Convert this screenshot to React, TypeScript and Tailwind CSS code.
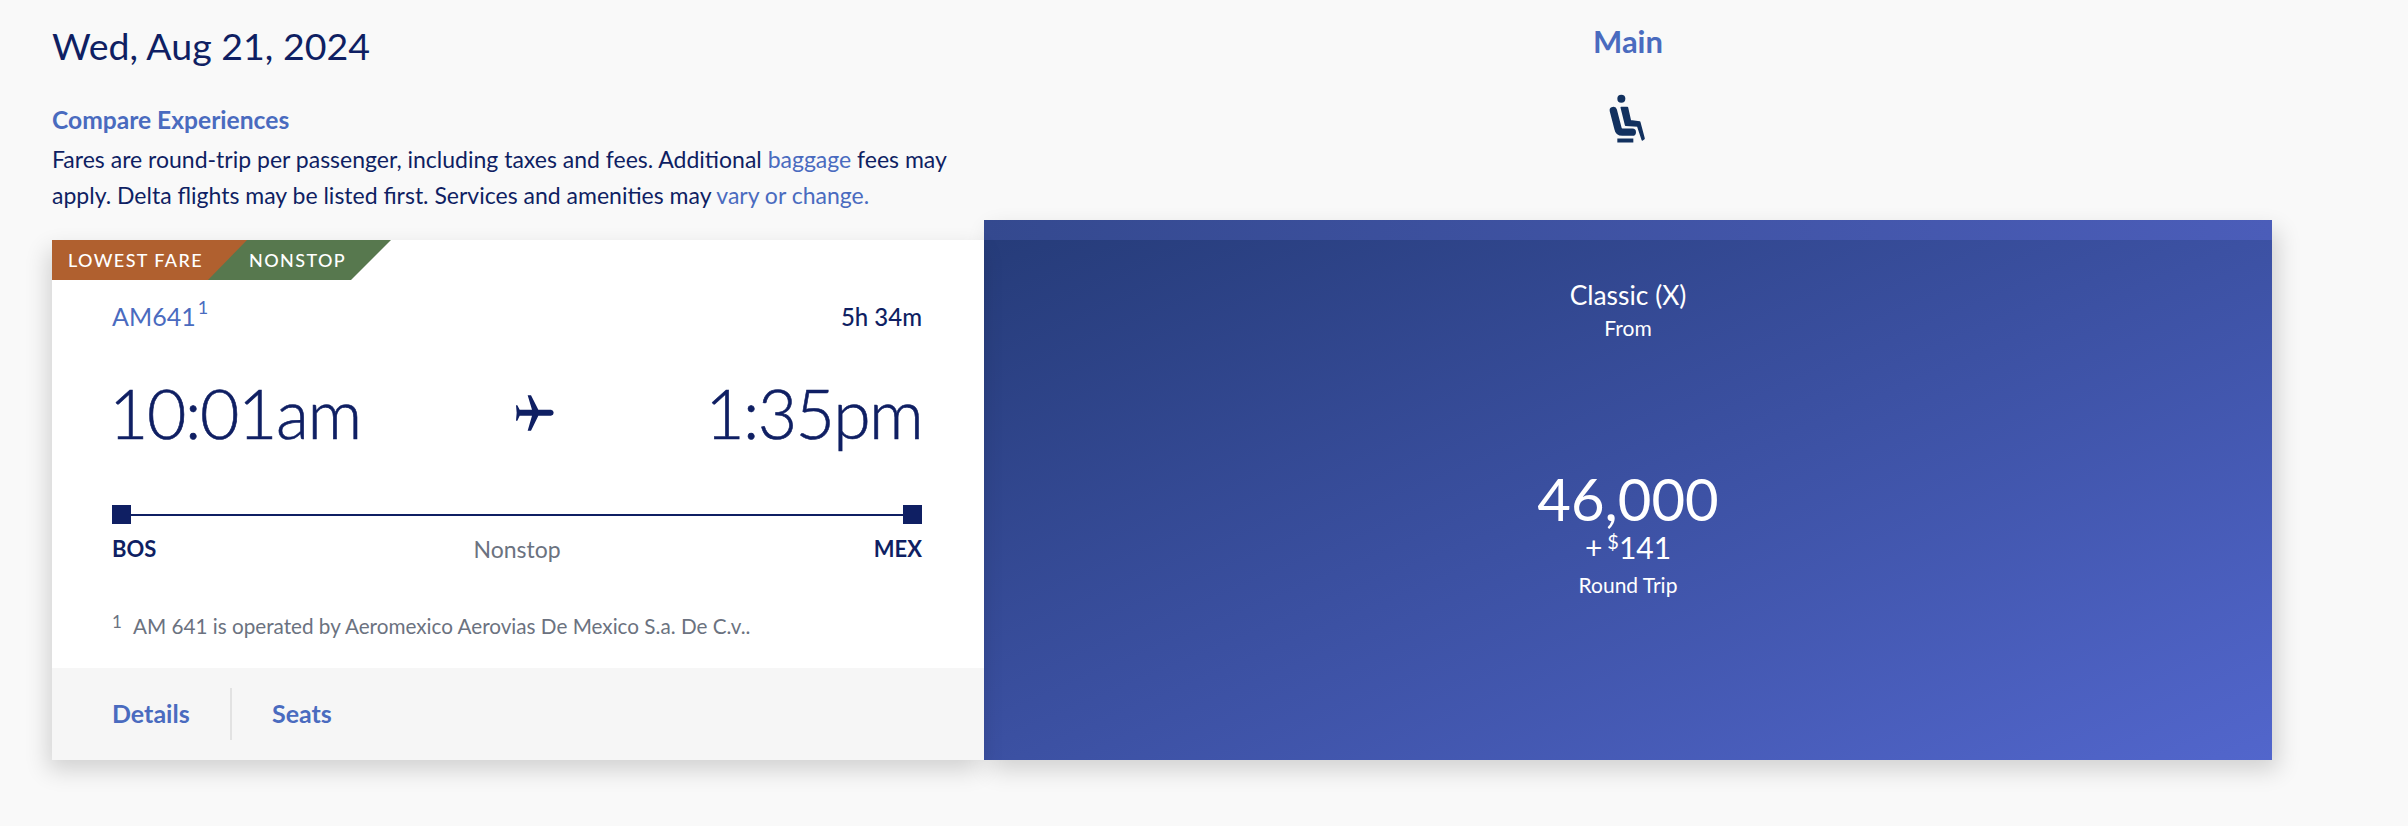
import React from 'react';

function SeatIcon() {
  return (
    <svg viewBox="325 280 120 155" className="w-[40px] h-[52px]" fill="none">
      <circle cx="365" cy="297" r="12" fill="#12315f" />
      <path d="M341 332 L355 386 Q357 397 368 397 L398 397" stroke="#12315f" strokeWidth="22" strokeLinecap="round" strokeLinejoin="round" />
      <path d="M365 323 L383 323 L392 363 L420 367 L433 416 L428 420 L414 378 L378 376 Z" fill="#12315f" stroke="#12315f" strokeWidth="5" strokeLinejoin="round" />
      <rect x="353" y="416" width="48" height="12" fill="#12315f" />
    </svg>
  );
}

function PlaneIcon() {
  return (
    <svg viewBox="105 75 120 113" className="w-[40px] h-[38px] ml-[4px]" fill="#0f1f63">
      <path d="M108 108 L112 108 L119 122 L156 122 L143 78 L153 78 L175 122 L213 122 Q221 124 221 131 Q221 138 213 140 L175 140 L153 185 L143 185 L156 140 L119 140 L112 155 L108 155 L110 131 Z" />
    </svg>
  );
}

export default function App() {
  return (
    <div className="w-[2408px] h-[826px] overflow-hidden bg-[#f9f9f9] font-['Lato',sans-serif] text-[#0f1f63]">
      <div className="flex pl-[52px]">
        {/* left column */}
        <div className="w-[932px] relative z-10">
          <div className="h-[240px]">
            <h1 className="pt-[24px] text-[37.5px] leading-[44px]">Wed, Aug 21, 2024</h1>
            <h2 className="mt-[37px] text-[24.6px] leading-[30px] font-bold text-[#4a6bbf]">Compare Experiences</h2>
            <p className="mt-[6px] text-[23px] leading-[36px] w-[930px]">
              Fares are round-trip per passenger, including taxes and fees. Additional{' '}
              <span className="text-[#4a6bbf]">baggage</span> fees may apply. Delta flights may be listed first. Services and amenities may{' '}
              <span className="text-[#4a6bbf]">vary or change.</span>
            </p>
          </div>
          <div className="h-[520px] bg-white shadow-[-4px_10px_22px_rgba(0,0,0,0.16)] flex flex-col">
            <div className="flex h-[40px] text-white text-[18px] font-medium tracking-[1.4px] leading-[40px]">
              <div className="relative w-[339px]">
                <div className="absolute inset-0 bg-[#57784e] [clip-path:polygon(0_0,100%_0,299px_100%,0_100%)]" />
                <div className="absolute inset-0 bg-[#b0602f] [clip-path:polygon(0_0,195px_0,156px_100%,0_100%)]" />
                <span className="absolute left-[16px] top-0">LOWEST FARE</span>
                <span className="absolute left-[197px] top-0">NONSTOP</span>
              </div>
            </div>
            <div className="flex-1 pl-[60px] pr-[62px]">
              <div className="flex justify-between items-start pt-[18px]">
                <span className="text-[25px] leading-[36px] text-[#4a6bbf]">
                  AM641<sup className="text-[18px] ml-[2px] top-[-12px] relative align-baseline">1</sup>
                </span>
                <span className="text-[24px] leading-[36px] font-medium pt-[1px]">5h 34m</span>
              </div>
              <div className="flex justify-between items-center mt-[42px] h-[72px]">
                <span className="text-[68px] leading-[72px] font-light tracking-[-1.4px] ml-[-3px] [-webkit-text-stroke:0.6px_#0f1f63]">10:01am</span>
                <PlaneIcon />
                <span className="text-[68px] leading-[72px] font-light tracking-[-1.7px] [-webkit-text-stroke:0.6px_#0f1f63]">1:35pm</span>
              </div>
              <div className="flex items-center mt-[56px]">
                <div className="w-[19px] h-[19px] bg-[#0f1f63]" />
                <div className="flex-1 h-[2px] bg-[#0f1f63]" />
                <div className="w-[19px] h-[19px] bg-[#0f1f63]" />
              </div>
              <div className="flex justify-between items-center mt-[10px] text-[22px] leading-[30px] font-bold">
                <span>BOS</span>
                <span className="font-normal text-[#6b7280] text-[23px] ml-[4px]">Nonstop</span>
                <span>MEX</span>
              </div>
              <p className="mt-[47px] text-[20.7px] leading-[30px] text-[#6b7280]">
                <sup className="text-[17px] relative top-[-6px] align-baseline mr-[11px]">1</sup>
                AM 641 is operated by Aeromexico Aerovias De Mexico S.a. De C.v..
              </p>
            </div>
            <div className="h-[92px] bg-[#f6f6f6] flex items-center text-[25px] font-bold text-[#4a6bbf]">
              <span className="pl-[60px] w-[178px]">Details</span>
              <div className="w-[2px] h-[52px] bg-[#e2e2e2]" />
              <span className="pl-[40px]">Seats</span>
            </div>
          </div>
        </div>

        {/* right column */}
        <div className="w-[1288px]">
          <div className="h-[220px] flex flex-col items-center">
            <div className="pt-[23px] text-[31px] leading-[36px] font-bold text-[#4a6bbf]">Main</div>
            <div className="mt-[34px]"><SeatIcon /></div>
          </div>
          <div className="h-[540px] bg-[linear-gradient(to_bottom_right,#253b78,#5266cc)] shadow-[6px_10px_22px_rgba(0,0,0,0.16)] text-white flex flex-col items-center">
            <div className="self-stretch h-[20px] bg-[linear-gradient(90deg,#34498f,#4b5db9)]" />
            <div className="mt-[39px] text-[26.4px] leading-[32px]">Classic (X)</div>
            <div className="mt-[2px] text-[21px] leading-[30px]">From</div>
            <div className="mt-[126px] text-[58px] leading-[60px]">46,000</div>
            <div className="text-[30px] leading-[36px]">
              +<sup className="text-[20px] relative top-[-10px] align-baseline ml-[5px]">$</sup>141
            </div>
            <div className="mt-[5px] text-[21px] leading-[30px]">Round Trip</div>
          </div>
        </div>
      </div>
    </div>
  );
}
